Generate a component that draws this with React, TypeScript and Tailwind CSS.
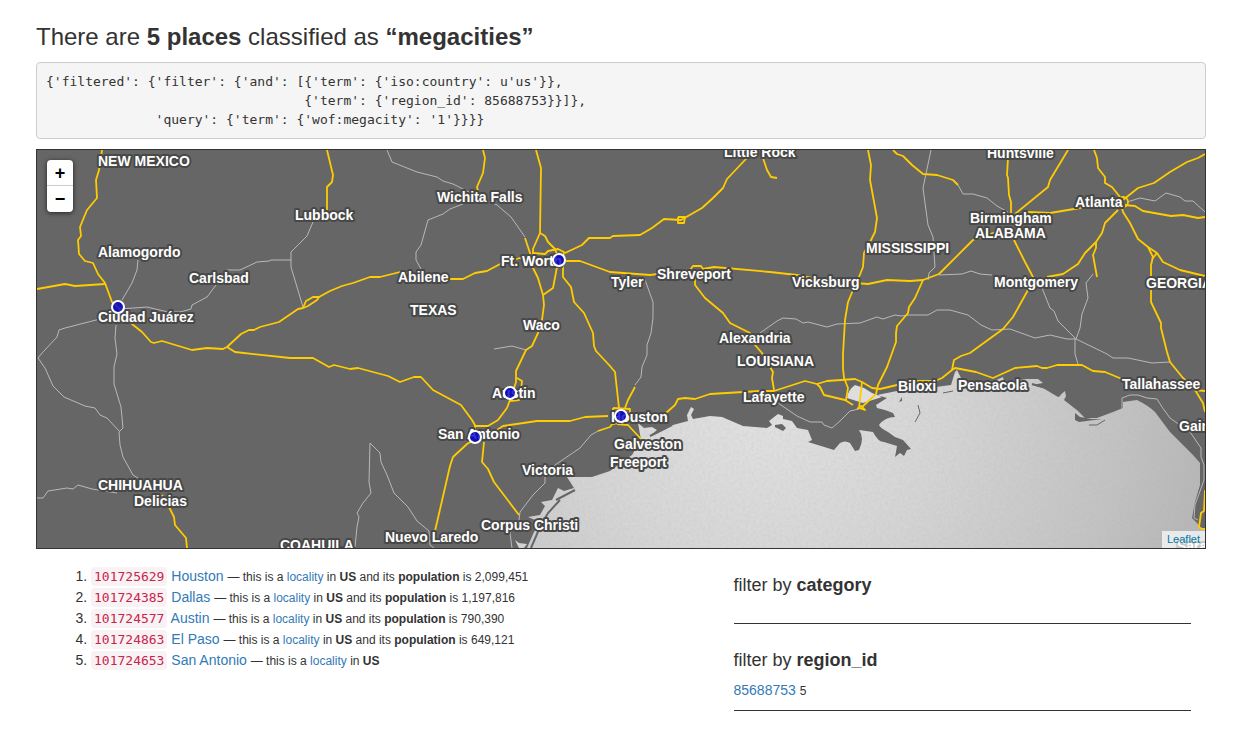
import React from "react";

type Place = { id: string; name: string; population?: string };
type Label = { text: string; x: number; y: number };

const places: Place[] = [
  { id: "101725629", name: "Houston", population: "2,099,451" },
  { id: "101724385", name: "Dallas", population: "1,197,816" },
  { id: "101724577", name: "Austin", population: "790,390" },
  { id: "101724863", name: "El Paso", population: "649,121" },
  { id: "101724653", name: "San Antonio" },
];

const query = `{'filtered': {'filter': {'and': [{'term': {'iso:country': u'us'}},
                                 {'term': {'region_id': 85688753}}]},
              'query': {'term': {'wof:megacity': '1'}}}}`;

const motorways = [
  "102,150 99,170 96,180 97,198 87,210 80,227 81,236 78,240 79,254 85,261 93,263 98,274 105,283 112,302 118,307",
  "37,289 65,284 75,286 105,284",
  "118,307 132,324 142,332 151,342 154,343 162,341 192,350 207,348 223,349 227,347 241,334 249,330 254,330 260,327 279,322 298,309 303,308 306,301 313,297 319,297 330,291 342,286 353,283 370,277 380,277 400,272 425,276 450,279 463,279 475,273 487,271 502,263 520,258 533,262",
  "303,308 308,306 317,300 319,297",
  "227,347 235,352 290,358 313,358 329,367 334,365 350,369 358,368 388,376 400,382 414,377 421,377 433,390 461,405 472,420 476,427",
  "327,150 333,175 332,182 327,187 327,210",
  "483,150 485,158 483,173 477,187 478,191",
  "536,150 541,168 540,233 533,249 533,267",
  "540,233 545,236 548,242 555,249 559,260",
  "525,238 530,253 533,268 538,278 543,295 544,305 542,320 538,333 532,346 526,350 516,371 516,382 510,400 507,408 498,420 488,426 475,426 474,437",
  "533,253 545,254 548,251 558,249 564,252 563,260",
  "557,262 557,267 553,288 543,295",
  "559,260 563,267 563,277 571,287 574,302 584,313 593,333 594,346 596,351 610,366 615,372 619,408",
  "565,253 582,245 589,238 610,238 613,236 640,235 652,228 664,219 681,220 702,208 713,198 723,188 727,179 745,160 754,150",
  "678,217 685,217 684,223 678,223 678,217",
  "763,150 763,158 767,170 771,177 777,178",
  "560,261 580,261 610,272 650,275 690,270 693,266 701,266 703,269 714,267 770,272 797,275 812,278 840,282 868,284 887,280 910,281 923,280 939,274 973,240 1010,227",
  "695,278 695,285 705,298 723,313 730,323 750,333 755,345 762,353 770,367 773,372 772,378 774,390",
  "868,150 871,165 870,180 877,218 875,232 870,242 864,253 863,267 859,277 853,290 848,302 845,320 843,354 843,368 844,378 848,388 846,400",
  "893,150 897,154 903,156 912,165 923,174 937,175 953,180 958,185",
  "923,280 915,298 909,307 908,313 897,326 896,333 896,342 887,367 878,385 876,394 862,407",
  "1008,158 1007,175 1008,178 1009,195 1011,202 1011,213",
  "1068,150 1050,180 1048,187 1015,214",
  "1028,212 1050,213 1080,208 1120,203",
  "1094,150 1097,158 1098,168 1105,177 1105,183 1112,187 1120,197",
  "1123,200 1138,188 1154,183 1170,172 1187,162 1198,158 1205,154",
  "1125,205 1135,206 1143,211 1171,216 1183,215 1198,218 1205,217",
  "1118,210 1105,223 1102,233 1096,242 1085,253 1078,264 1063,274 1047,277",
  "1096,242 1096,248 1093,255 1097,277",
  "1122,208 1123,212 1130,223 1138,239 1148,247 1157,253 1163,262 1180,270 1205,276",
  "1148,247 1153,257 1151,265 1151,302 1161,323 1161,328 1167,352 1170,362 1183,378 1195,390 1205,391",
  "1157,253 1152,259",
  "1195,390 1203,403 1205,412",
  "1014,240 1025,262 1033,277 1028,290 1013,317 1003,329 970,353 961,356 954,360 952,370 942,378 935,381 917,381 897,385 880,389 872,388 862,382 855,379 827,381 817,384 805,381 774,391 760,391 710,394 695,399 685,398 678,399 675,405 666,413",
  "817,384 820,387 824,395 845,400 853,405",
  "862,382 859,408 865,410 861,406 857,409",
  "952,370 955,368 976,372 993,378 1015,368 1037,366 1042,368 1047,368 1057,365 1082,365 1093,371 1105,372 1122,379 1150,383 1190,385",
  "635,387 628,400 625,408",
  "613,408 630,409 630,420 613,424 613,408",
  "617,424 628,425 641,439",
  "497,430 503,426 537,421 570,421 585,417 608,416",
  "598,431 610,427 613,423",
  "474,440 467,444 453,457 450,466 435,531",
  "484,442 482,462 488,469 494,482 519,515",
  "517,378 522,381 521,390 519,400 510,401",
  "162,495 169,507 174,517 175,525 186,538 187,548",
  "1205,490 1204,511 1201,513 1199,527 1202,529 1205,529",
];

const highways = [
  "138,260 137,270 132,283 122,300",
  "120,309 147,307 168,312 180,312 191,309 192,305 207,297 216,285",
  "227,270 240,270 257,262 269,261 271,260 291,260",
  "313,222 307,236 291,252 291,267 303,307",
  "100,319 65,328 59,330 57,337 43,352 38,358 45,368 53,386 64,397 85,406 95,408 100,415 107,418 120,432",
  "116,325 115,338 117,354 114,367 114,384 121,407 123,428 119,432 120,445 123,457 133,475 138,478",
  "37,498 43,498 48,491 67,488 73,489 78,485 92,489 117,493",
  "387,150 392,162 417,172 437,177 443,181 453,184 467,191 497,205 511,217 525,237",
  "463,204 450,209 443,214 428,220 421,245 416,252 416,260 421,269",
  "494,349 512,346 526,350",
  "644,277 653,302 653,318 651,333 647,345 647,355 642,367 641,377 635,385",
  "760,333 777,321 783,318 796,319 803,323 808,322 827,327 837,324 860,323 877,317 883,319 895,315 901,316 910,315 928,315 937,310 950,310 968,315 981,325 992,330 1010,329 1035,338 1050,335 1067,339 1076,339 1107,354 1113,358 1128,358 1152,363 1170,362",
  "931,150 923,188 928,225 933,237 935,267 929,273 928,280",
  "939,275 962,274 971,271 980,274 992,275",
  "958,185 963,194 973,194 987,198 997,206 1008,212",
  "1042,288 1050,308 1054,311 1058,321 1075,338 1075,354 1078,364",
  "1093,274 1086,283 1088,298 1082,314 1080,328 1076,339",
  "1127,202 1140,198 1155,201 1166,193 1180,197 1185,201 1193,201 1205,212",
  "778,403 797,416 810,422 822,422 824,425 832,428 840,421 850,411 859,409",
  "598,431 591,435 580,448 555,465 545,475 545,483 533,495 520,512 519,520 510,533 512,548",
  "355,547 357,527 359,517 357,513 363,503 371,493 369,482 370,443 380,453 381,462 387,475 394,493 408,507 417,521 429,531 430,545 434,548",
  "1122,409 1122,398 1130,395 1138,395 1147,398 1157,399 1162,407 1170,418 1177,423 1190,432 1201,448 1201,457 1204,465 1204,480 1195,505 1194,518 1198,520",
];

const gulf =
  "M527,548 L534,532 L540,522 L528,517 L540,515 L545,506 L541,502 L552,500 L558,488 L564,491 L574,488 L567,477 L592,477 L610,471 L632,455 L641,440 L638,423 L644,428 L652,427 L657,430 L650,436 L673,425 L688,421 L687,415 L691,407 L694,409 L691,415 L693,419 L710,416 L722,417 L743,426 L767,428 L772,425 L769,421 L778,414 L783,416 L783,419 L792,421 L797,428 L808,430 L812,440 L808,442 L834,450 L840,443 Q845,440 850,443 L855,451 L859,450 Q865,438 859,430 L873,432 Q878,442 884,442 L897,446 L895,457 L900,453 L904,456 L907,450 L911,449 L903,440 L895,437 L888,432 Q880,428 879,425 Q885,417 895,417 L893,413 L885,410 L877,408 L876,405 L887,398 L877,395 L897,391 L920,389 L951,385 L955,372 L957,370 L961,378 L963,384 L990,383 L1003,377 L1004,382 L1027,379 L1038,379 L1043,383 L1032,385 L1043,388 L1058,397 L1065,391 L1066,396 L1064,400 L1078,411 L1085,418 L1097,418 L1113,412 L1123,408 L1123,402 L1137,400 Q1149,406 1155,412 L1170,432 L1193,455 L1200,463 L1200,485 L1195,502 L1192,518 L1197,523 L1202,530 L1206,530 L1206,549 L527,549 Z";

const labels: Label[] = [
  { text: "NEW MEXICO", x: 98, y: 166 },
  { text: "Alamogordo", x: 98, y: 257 },
  { text: "Carlsbad", x: 189, y: 283 },
  { text: "Ciudad Juárez", x: 98, y: 322 },
  { text: "Lubbock", x: 295, y: 220 },
  { text: "Wichita Falls", x: 437, y: 202 },
  { text: "Abilene", x: 398, y: 282 },
  { text: "TEXAS", x: 410, y: 315 },
  { text: "Ft. Worth", x: 501, y: 266 },
  { text: "Waco", x: 523, y: 330 },
  { text: "Tyler", x: 611, y: 287 },
  { text: "Shreveport", x: 657, y: 279 },
  { text: "Little Rock", x: 724, y: 157 },
  { text: "Vicksburg", x: 792, y: 287 },
  { text: "MISSISSIPPI", x: 866, y: 253 },
  { text: "Alexandria", x: 719, y: 343 },
  { text: "LOUISIANA", x: 737, y: 366 },
  { text: "Lafayette", x: 743, y: 402 },
  { text: "Huntsville", x: 987, y: 158 },
  { text: "Birmingham", x: 970, y: 223 },
  { text: "ALABAMA", x: 975, y: 238 },
  { text: "Atlanta", x: 1075, y: 207 },
  { text: "Montgomery", x: 994, y: 287 },
  { text: "GEORGIA", x: 1146, y: 288 },
  { text: "Biloxi", x: 898, y: 391 },
  { text: "Pensacola", x: 958, y: 390 },
  { text: "Tallahassee", x: 1122, y: 389 },
  { text: "Gainesville", x: 1179, y: 431 },
  { text: "Austin", x: 492, y: 398 },
  { text: "Houston", x: 611, y: 422 },
  { text: "San Antonio", x: 438, y: 439 },
  { text: "Galveston", x: 614, y: 449 },
  { text: "Freeport", x: 610, y: 467 },
  { text: "Victoria", x: 522, y: 475 },
  { text: "Corpus Christi", x: 481, y: 530 },
  { text: "Nuevo Laredo", x: 385, y: 542 },
  { text: "COAHUILA", x: 280, y: 550 },
  { text: "CHIHUAHUA", x: 98, y: 490 },
  { text: "Delicias", x: 134, y: 506 },
  { text: "Sarasota", x: 1177, y: 551 },
];

const markers = [
  [118, 307],
  [559, 260],
  [510, 393],
  [621, 416],
  [475, 437],
];

function MapDrawing() {
  return (
    <svg
      className="block h-full w-full"
      viewBox="37 150 1168 398"
      preserveAspectRatio="xMidYMid slice"
      role="img"
      aria-label="Map of places"
    >
      <defs>
        <radialGradient id="water" gradientUnits="userSpaceOnUse" cx="760" cy="400" r="520">
          <stop offset="0" stopColor="#e2e2e2" />
          <stop offset="0.35" stopColor="#d5d5d5" />
          <stop offset="0.7" stopColor="#c2c2c2" />
          <stop offset="1" stopColor="#aeaeae" />
        </radialGradient>
        <filter id="grain" x="0" y="0" width="100%" height="100%">
          <feTurbulence type="fractalNoise" baseFrequency="0.35" numOctaves="2" seed="4" />
          <feColorMatrix values="0 0 0 0 0.4  0 0 0 0 0.4  0 0 0 0 0.4  0.5 0 0 0 -0.17" />
          <feComposite in2="SourceGraphic" operator="in" />
        </filter>
      </defs>
      <rect x="0" y="100" width="1300" height="500" fill="#666" />
      <path d={gulf} fill="url(#water)" />
      <path d={gulf} fill="#fff" filter="url(#grain)" opacity="0.6" />
      <path d="M855,385 L864,388 L872,393 L882,397 L863,403 L847,398 Q848,390 855,385 Z" fill="#dedede" />
      <path d="M515,540 L519,543 L527,544 L524,548 L519,548 Z" fill="#d2d2d2" />
      <g fill="#666">
        <path d="M775,425 L782,424 L786,428 L783,431 L775,427 Z" />
        <path d="M899,402 L902,397 L902,401 Z" />
        <path d="M1075,413 L1080,417 L1092,419 L1102,419 L1079,422 L1075,420 Z" />
      </g>
      <g fill="none" stroke="#666">
        <path d="M531,548 L540,527 L548,513 L560,500" strokeWidth="2" />
        <path d="M556,500 L575,490" strokeWidth="2" />
        <path d="M650,436 L672,425" strokeWidth="2" />
        <path d="M918,405 L920,413 L915,422" />
        <path d="M943,393 L953,391" />
        <path d="M1032,384 L1046,388 L1060,396" strokeWidth="2" />
        <path d="M1089,425 L1097,425 L1105,420" />
      </g>
      <g fill="none" stroke="#b8b8b8" strokeWidth="1" strokeLinejoin="round">
        {highways.map((points) => (
          <polyline key={points} points={points} />
        ))}
      </g>
      <g fill="none" stroke="#fc0" strokeWidth="1.8" strokeLinejoin="round">
        {motorways.map((points) => (
          <polyline key={points} points={points} />
        ))}
        <circle cx="1123" cy="202" r="5" />
      </g>
      <g
        className="font-['Liberation_Sans',Arial,sans-serif] text-[14px] font-bold"
        fill="#fff"
        stroke="#484848"
        strokeWidth="4"
        strokeLinejoin="round"
        paintOrder="stroke"
      >
        {labels.map((label) => (
          <text key={label.text} x={label.x} y={label.y}>
            {label.text}
          </text>
        ))}
      </g>
      <g fill="#00c" fillOpacity="0.8" stroke="#fff" strokeWidth="2">
        {markers.map(([x, y]) => (
          <circle key={x} cx={x} cy={y} r="6" />
        ))}
      </g>
    </svg>
  );
}

function PlaceRow({ place }: { place: Place }) {
  return (
    <li>
      <code className="rounded bg-[#f9f2f4] px-[3px] py-[2px] font-['DejaVu_Sans_Mono',monospace] text-[13px] leading-none text-[#c7254e]">
        {place.id}
      </code>{" "}
      <a href="#place" className="text-[#337ab7]">
        {place.name}
      </a>{" "}
      <small className="text-[12px] leading-none">
        — this is a{" "}
        <a href="#locality" className="text-[#337ab7]">
          locality
        </a>{" "}
        in <strong>US</strong>
        {place.population && (
          <>
            {" "}
            and its <strong>population</strong> is {place.population}
          </>
        )}
      </small>
    </li>
  );
}

export default function App() {
  return (
    <main className="bg-white pt-6 pr-8 pb-4 pl-9 font-['Liberation_Sans',Arial,sans-serif] text-[14px] text-[#333]">
      <h1 className="text-[24px] leading-[26px]">
        There are <strong>5 places</strong> classified as <strong>“megacities”</strong>
      </h1>

      <pre className="mt-3 overflow-hidden rounded border border-[#ccc] bg-[#f5f5f5] p-[9px] font-['DejaVu_Sans_Mono',monospace] text-[13px] leading-[19px]">
        {query}
      </pre>

      <section className="relative mt-[10px] h-[400px] overflow-hidden border border-[#333] bg-[#666]">
        <MapDrawing />
        <div className="absolute top-[10px] left-[10px] flex w-[26px] flex-col overflow-hidden rounded bg-white font-bold text-black shadow-[0_1px_5px_rgba(0,0,0,0.65)]">
          <button type="button" aria-label="Zoom in" className="h-[26px] border-b border-[#ccc] text-[18px] leading-[26px]">
            +
          </button>
          <button type="button" aria-label="Zoom out" className="h-[26px] text-[18px] leading-[26px]">
            −
          </button>
        </div>
        <div className="absolute right-0 bottom-0 bg-white/70 px-[5px] text-[11px] leading-[17px]">
          <a href="#leaflet" className="text-[#0078a8]">
            Leaflet
          </a>
        </div>
      </section>

      <div className="grid grid-cols-12 pt-[17px]">
        <div className="col-span-7 px-[15px]">
          <ol className="list-decimal pl-10 leading-[21px]">
            {places.map((place) => (
              <PlaceRow key={place.id} place={place} />
            ))}
          </ol>
        </div>
        <aside className="col-span-5 px-[15px] pt-[9px]">
          <h2 className="text-[18px] leading-5">
            filter by <strong>category</strong>
          </h2>
          <hr className="mt-7 border-[#333]" />
          <h2 className="mt-[26px] text-[18px] leading-5">
            filter by <strong>region_id</strong>
          </h2>
          <p className="mt-[10px] leading-5">
            <a href="#region" className="text-[#337ab7]">
              85688753
            </a>{" "}
            <small className="text-[12px] leading-none">5</small>
          </p>
          <hr className="mt-[10px] border-[#333]" />
        </aside>
      </div>
    </main>
  );
}
